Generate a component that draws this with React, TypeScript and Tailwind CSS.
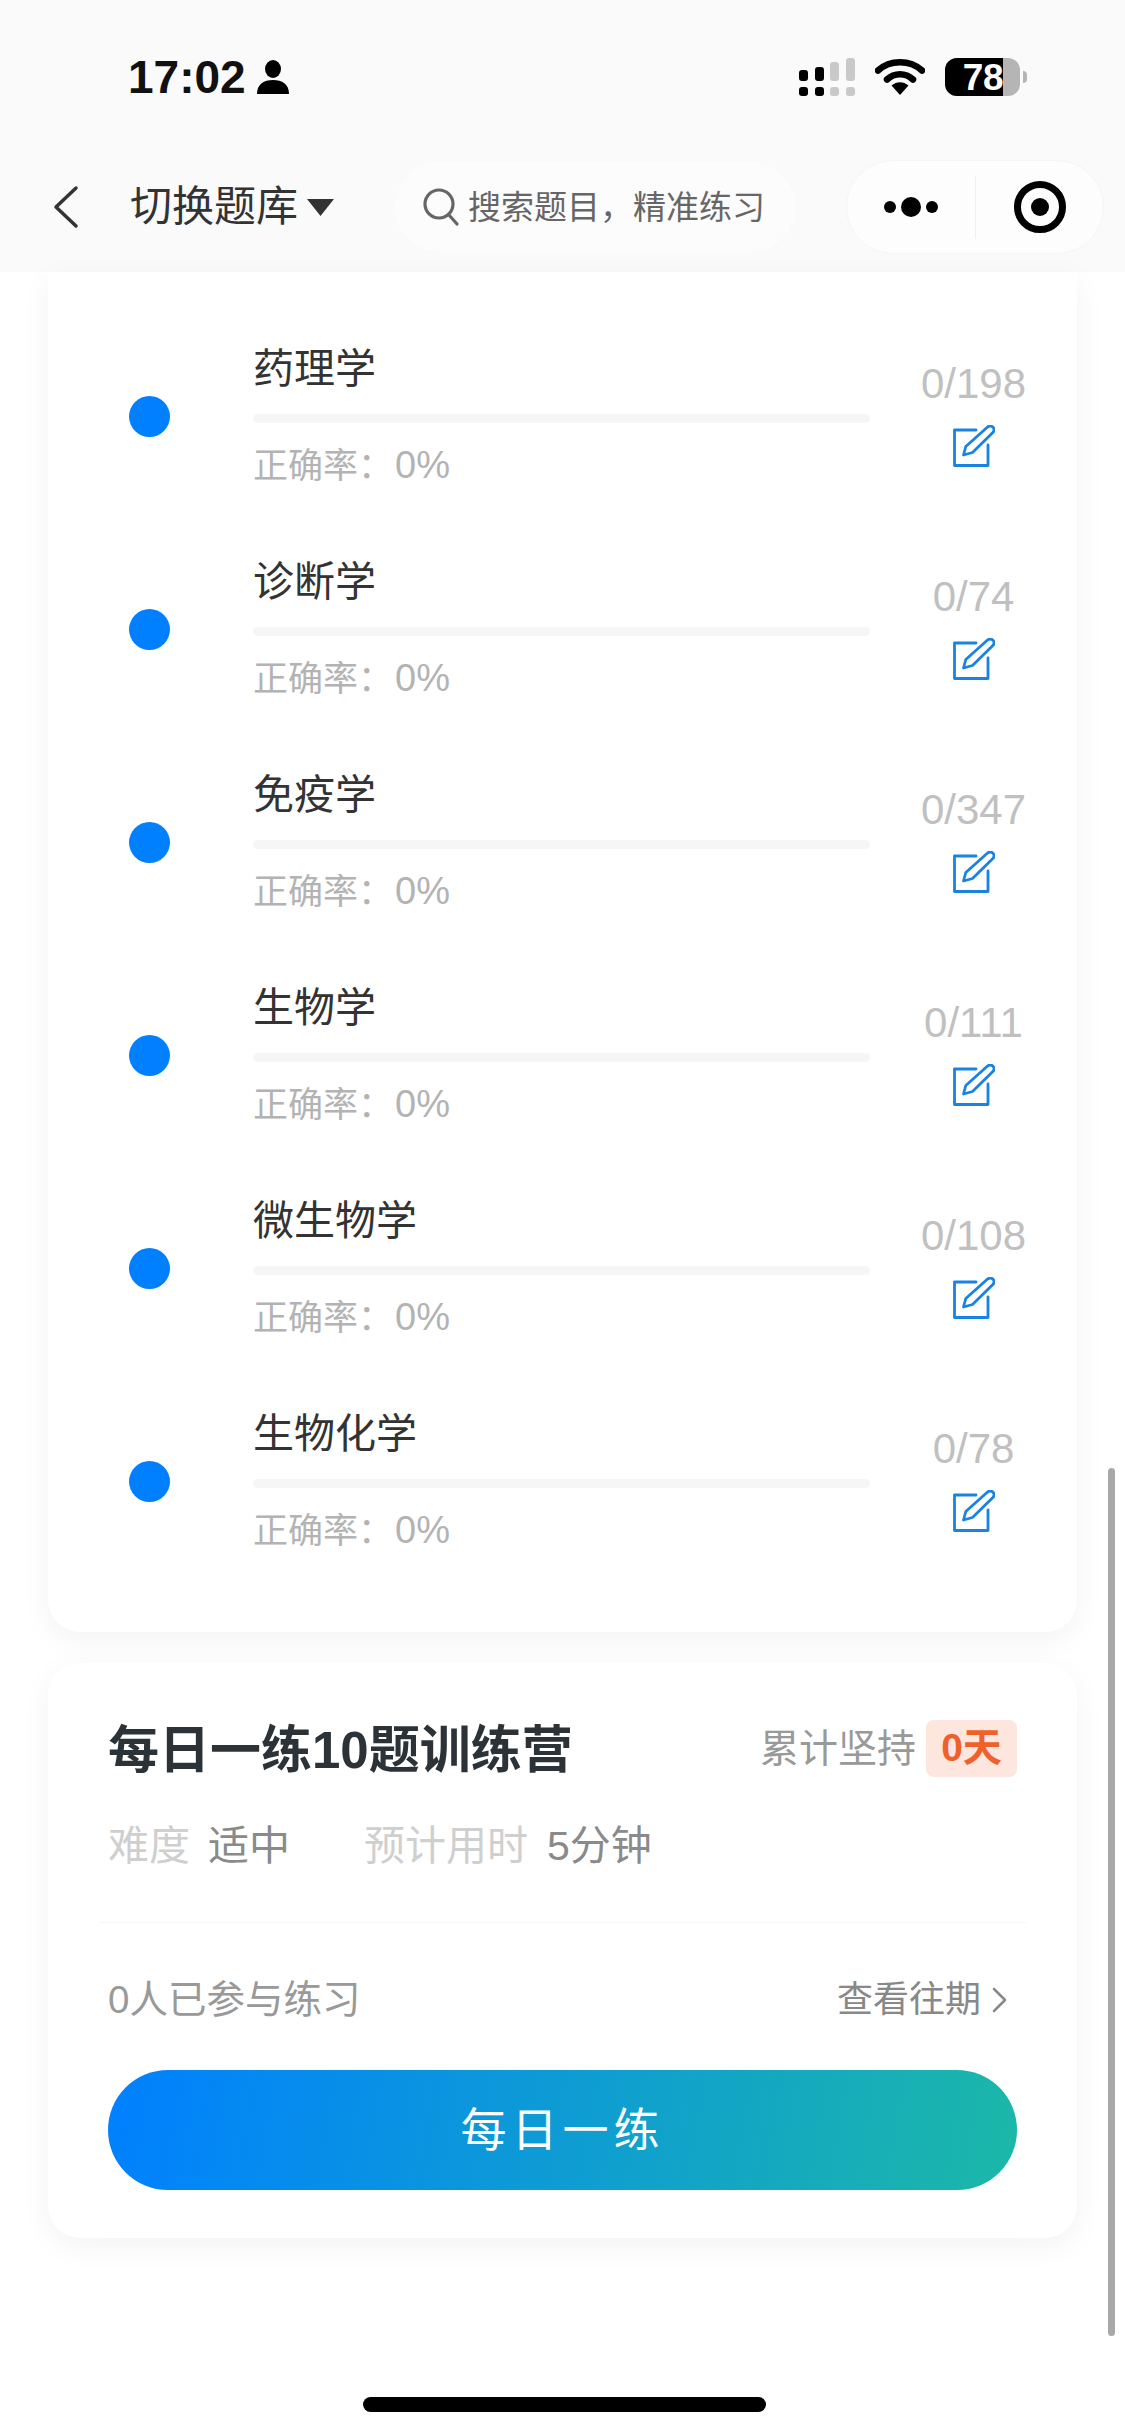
const subjects = [
  { name: "药理学", count: "0/198" },
  { name: "诊断学", count: "0/74" },
  { name: "免疫学", count: "0/347" },
  { name: "生物学", count: "0/111" },
  { name: "微生物学", count: "0/108" },
  { name: "生物化学", count: "0/78" },
];

function SignalIcon() {
  return (
    <svg width="56" height="38" viewBox="0 0 56 38">
      <rect x="0" y="12" width="9" height="11" rx="3" fill="#000" />
      <rect x="16" y="9" width="9" height="14" rx="3" fill="#000" />
      <rect x="31" y="4" width="9" height="19" rx="3" fill="#c9c9c9" />
      <rect x="47" y="0" width="9" height="23" rx="3" fill="#c9c9c9" />
      <rect x="0" y="29" width="9" height="9" rx="3" fill="#000" />
      <rect x="16" y="29" width="9" height="9" rx="3" fill="#000" />
      <rect x="31" y="29" width="9" height="9" rx="3" fill="#c9c9c9" />
      <rect x="47" y="29" width="9" height="9" rx="3" fill="#c9c9c9" />
    </svg>
  );
}

function WifiIcon() {
  return (
    <svg width="50" height="36" viewBox="0 0 50 36" fill="none">
      <path d="M3 11.5C15 0.5 35 0.5 47 11.5" stroke="#000" strokeWidth="6.5" strokeLinecap="round" />
      <path d="M12 20.5C19.5 13.5 30.5 13.5 38 20.5" stroke="#000" strokeWidth="6.5" strokeLinecap="round" />
      <path d="M16.5 26.5C21.5 22 28.5 22 33.5 26.5L25 36Z" fill="#000" />
    </svg>
  );
}

function Battery() {
  return (
    <div className="flex items-center gap-[3px]">
      <div className="relative flex h-[38px] w-[75px] overflow-hidden rounded-[12px] bg-[#b5b5b5]">
        <div className="flex h-full w-[58px] items-center justify-end bg-black text-[37px] leading-none font-bold tracking-[-0.5px] text-white">
          78
        </div>
      </div>
      <div className="h-[12px] w-[4px] rounded-r-full bg-[#b5b5b5]" />
    </div>
  );
}

function EditIcon() {
  return (
    <svg width="42" height="42" viewBox="0 0 42 42" fill="none" stroke="#1a82e2" strokeWidth="2.8" strokeLinecap="round" strokeLinejoin="round">
      <path d="M23 5H1.5V40.5H35V20" />
      <path d="M34 2.5C36 0.8 38.5 0.8 40 2.3C41.5 3.8 41.3 6 39.6 7.8L19.5 27.5L10.5 30L12.8 21.5Z" />
    </svg>
  );
}

function SubjectRow({ name, count }: { name: string; count: string }) {
  return (
    <div className="flex h-[213px] items-center pl-[81px]">
      <div className="h-[41px] w-[41px] shrink-0 rounded-full bg-[#0080ff]" />
      <div className="ml-[83px] flex w-[617px] shrink-0 flex-col">
        <div className="h-[50px] text-[41px] leading-[53px] text-[#333]">{name}</div>
        <div className="mt-[21px] h-[9px] rounded-full bg-[#f6f6f6]" />
        <div className="mt-[17px] h-[50px] text-[35px] leading-[50px] text-[#b3b3b3]">
          正确率：<span className="ml-[2px] text-[38px]">0%</span>
        </div>
      </div>
      <div className="flex flex-1 flex-col items-center gap-[19px] pb-[5px]">
        <div className="h-[44px] text-[42px] leading-[44px] text-[#c0c0c0]">{count}</div>
        <EditIcon />
      </div>
    </div>
  );
}

export default function App() {
  return (
    <div className="relative h-[2436px] w-[1125px] overflow-hidden bg-white font-['Liberation_Sans','Noto_Sans_CJK_SC',sans-serif]">
      <header className="h-[272px] bg-[#fafafa]">
        <div className="flex h-[154px] items-center justify-between pr-[98px] pl-[128px]">
          <div className="flex items-center gap-[11px]">
            <span className="text-[46px] leading-none font-bold text-[#111]">17:02</span>
            <svg width="32" height="34" viewBox="0 0 32 34" fill="#000">
              <ellipse cx="16" cy="9" rx="8" ry="9" />
              <path d="M0 34C0 24 7 20 16 20C25 20 32 24 32 34Z" />
            </svg>
          </div>
          <div className="flex items-center gap-[20px]">
            <SignalIcon />
            <WifiIcon />
            <Battery />
          </div>
        </div>
        <div className="flex h-[106px] items-center">
          <svg className="ml-[50px]" width="30" height="44" viewBox="0 0 30 44" fill="none" stroke="#333" strokeWidth="3.5" strokeLinecap="round" strokeLinejoin="round">
            <path d="M26 3L6 22L26 41" />
          </svg>
          <span className="ml-[50px] text-[42px] leading-none text-[#333]">切换题库</span>
          <svg className="ml-[8px]" width="29" height="18" viewBox="0 0 29 18" fill="#333">
            <path d="M1 1H28L14.5 18Z" />
          </svg>
          <div className="ml-[60px] flex h-[90px] w-[400px] items-center rounded-full bg-[#fcfcfc] pl-[28px]">
            <svg width="36" height="38" viewBox="0 0 36 38" fill="none" stroke="#666" strokeWidth="3.2" strokeLinecap="round">
              <circle cx="16" cy="16" r="14" />
              <path d="M26 27L34 36" />
            </svg>
            <span className="ml-[9px] text-[33px] leading-none whitespace-nowrap text-[#666]">搜索题目，精准练习</span>
          </div>
          <div className="ml-[51px] flex h-[94px] w-[258px] items-center rounded-full border border-[#f5f5f5] bg-[#fdfdfd]">
            <div className="flex w-[128px] items-center justify-center gap-[5px]">
              <div className="h-[12px] w-[12px] rounded-full bg-black" />
              <div className="h-[20px] w-[20px] rounded-full bg-black" />
              <div className="h-[12px] w-[12px] rounded-full bg-black" />
            </div>
            <div className="h-[63px] w-px bg-[#f0f0f0]" />
            <div className="flex flex-1 items-center justify-center">
              <div className="flex h-[52px] w-[52px] items-center justify-center rounded-full border-[7px] border-black">
                <div className="h-[18px] w-[18px] rounded-full bg-black" />
              </div>
            </div>
          </div>
        </div>
      </header>

      <main className="px-[48px]">
        <section className="rounded-b-[32px] bg-white pt-[38px] pb-[44px] shadow-[0_8px_30px_rgba(0,0,0,0.05)]">
          {subjects.map((s) => (
            <SubjectRow key={s.name} name={s.name} count={s.count} />
          ))}
        </section>

        <section className="mt-[31px] h-[575px] rounded-[32px] bg-white px-[60px] shadow-[0_8px_30px_rgba(0,0,0,0.05)]">
          <div className="flex items-center justify-between pt-[55px]">
            <h2 className="h-[60px] text-[51px] leading-[66px] font-bold whitespace-nowrap text-[#2c3338]">每日一练10题训练营</h2>
            <div className="flex items-center gap-[10px]">
              <span className="text-[39px] leading-none text-[#999]">累计坚持</span>
              <span className="flex h-[57px] w-[91px] items-center justify-center rounded-[8px] bg-[#fde6de] text-[39px] font-bold text-[#f0602a]">0天</span>
            </div>
          </div>
          <div className="mt-[39px] flex h-[58px] items-center text-[41px] leading-none whitespace-nowrap">
            <span className="text-[#cfcfcf]">难度</span>
            <span className="ml-[18px] text-[#8a8a8a]">适中</span>
            <span className="ml-[74px] text-[#cfcfcf]">预计用时</span>
            <span className="ml-[19px] text-[#8a8a8a]">5分钟</span>
          </div>
          <div className="mt-[47px] -mx-[10px] h-px bg-[#f7f7f7]" />
          <div className="mt-[53px] flex h-[48px] items-center justify-between">
            <span className="text-[38.5px] leading-none text-[#999]">0人已参与练习</span>
            <div className="flex items-center gap-[10px] pr-[10px]">
              <span className="text-[36px] leading-none text-[#888]">查看往期</span>
              <svg width="16" height="26" viewBox="0 0 16 26" fill="none" stroke="#888" strokeWidth="2.5" strokeLinecap="round" strokeLinejoin="round">
                <path d="M3 2L14 13L3 24" />
              </svg>
            </div>
          </div>
          <button className="mt-[46px] flex h-[120px] w-full items-center justify-center rounded-full bg-[linear-gradient(100deg,#0080ff,#1cb8a8)] text-[46px] tracking-[5px] text-white">
            每日一练
          </button>
        </section>
      </main>

      <div className="absolute top-[1468px] left-[1108px] h-[868px] w-[7px] rounded-full bg-[#a8a8a8]" />
      <div className="absolute top-[2397px] left-[363px] h-[15px] w-[403px] rounded-full bg-black" />
    </div>
  );
}
